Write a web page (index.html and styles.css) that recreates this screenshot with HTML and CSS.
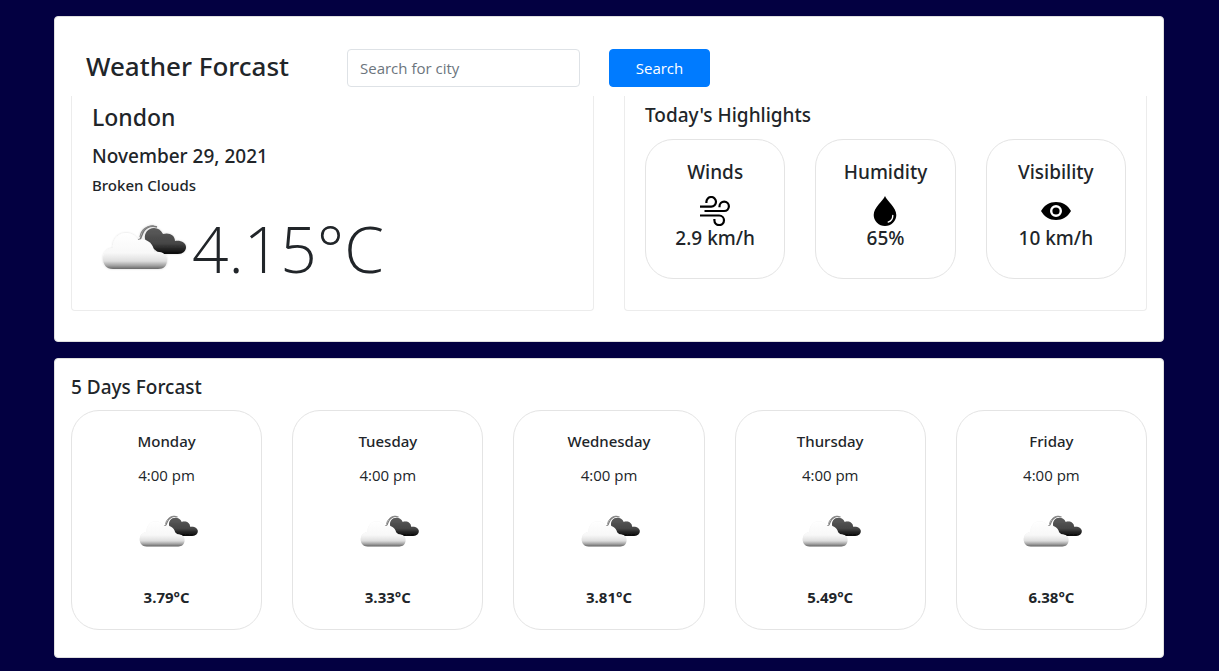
FILE: index.html
```html
<!DOCTYPE html>
<html lang="en">
<head>
<meta charset="utf-8">
<meta name="viewport" content="width=device-width, initial-scale=1">
<title>Weather Forcast</title>
<link rel="stylesheet" href="styles.css">
</head>
<body>
<svg class="sprite" aria-hidden="true">
  <defs>
    <linearGradient id="white-cloud" x1="0" y1="0" x2="0" y2="1">
      <stop offset="0" stop-color="#ffffff"/>
      <stop offset=".55" stop-color="#f8f8f8"/>
      <stop offset=".78" stop-color="#dedede"/>
      <stop offset=".9" stop-color="#a4a4a4"/>
      <stop offset="1" stop-color="#686868"/>
    </linearGradient>
    <linearGradient id="dark-cloud" x1="0" y1="0" x2="0" y2="1">
      <stop offset="0" stop-color="#5c5c5c"/>
      <stop offset=".6" stop-color="#454545"/>
      <stop offset="1" stop-color="#050505"/>
    </linearGradient>
    <filter id="soft" x="-10%" y="-10%" width="120%" height="125%">
      <feGaussianBlur stdDeviation="0.5" result="shape"/>
      <feDropShadow in="shape" dx="0" dy="0" stdDeviation="0.8" flood-color="#000" flood-opacity=".16"/>
    </filter>
    <symbol id="clouds" viewBox="0 0 100 100">
      <g filter="url(#soft)">
        <path d="M46 43c3 0 3-3 4-5 2-7 8-10 15-8" fill="none" stroke="#777" stroke-width="1.5"/>
        <path d="M48 40c1-7 7-12 14-11" fill="none" stroke="#888" stroke-width="1.2"/>
        <path d="M53 42c-1-6 3-11 9-11 4 0 7 2 9 6 6-2 12 1 12 7 6-1 11 2 11 6s-3 7-8 7H68L56 47z" fill="url(#dark-cloud)"/>
      </g>
      <path d="M21 72C14 72 11 67 11 62c0-6 4-10 10-11-1-8 5-15 13-15 5 0 9 2 12 7 8-2 16 3 16 12 8-1 13 2 13 8s-3 9-9 9z" fill="url(#white-cloud)" filter="url(#soft)"/>
    </symbol>
  </defs>
</svg>
<main class="container">
  <section class="panel panel-current">
    <form class="search-bar">
      <h1 class="title">Weather Forcast</h1>
      <input class="search-input" type="search" placeholder="Search for city" aria-label="Search for city">
      <button class="search-button" type="button">Search</button>
    </form>
    <div class="current">
      <div class="card">
        <h2 class="city">London</h2>
        <h3 class="heading date">November 29, 2021</h3>
        <p class="description">Broken Clouds</p>
        <div class="reading">
          <svg class="cloud-large" role="img" aria-label="Broken clouds"><use href="#clouds"/></svg>
          <span class="temperature">4.15°C</span>
        </div>
      </div>
      <div class="card">
        <h3 class="heading">Today's Highlights</h3>
        <div class="highlights">
          <article class="tile highlight">
            <h4 class="heading">Winds</h4>
            <svg class="icon" viewBox="0 0 30 30" fill="none" stroke="#000" stroke-width="2.2" aria-hidden="true">
              <path d="M0 10.6h11.2a4.8 4.8 0 1 0-4.8-4.8V7M4.5 15h19.7a4.7 4.7 0 1 0-4.7-4.7v1M0 19.5h19.2a4.8 4.8 0 1 1-4.8 4.8V23"/>
            </svg>
            <p class="heading">2.9 km/h</p>
          </article>
          <article class="tile highlight">
            <h4 class="heading">Humidity</h4>
            <svg class="icon" viewBox="0 0 30 30" aria-hidden="true">
              <path d="M15 0c2 5 11.300 11.500 11.300 19A11.200 10.800 0 0 1 3.700 19C3.700 11.500 13 5 15 0z"/>
              <path d="M22.800 19.500c0 3.300-1.800 5.600-4.600 6.600" fill="none" stroke="#fff" stroke-width="1.400" stroke-linecap="round"/>
            </svg>
            <p class="heading">65%</p>
          </article>
          <article class="tile highlight">
            <h4 class="heading">Visibility</h4>
            <svg class="icon" viewBox="0 0 30 30" aria-hidden="true">
              <path d="M0 15C3.500 9 8.500 6 15 6s11.500 3 15 9c-3.500 6-8.500 9-15 9S3.500 21 0 15z"/>
              <circle cx="15" cy="15" r="4.800" stroke="#fff" stroke-width="2.400"/>
            </svg>
            <p class="heading">10 km/h</p>
          </article>
        </div>
      </div>
    </div>
  </section>

  <section class="panel panel-forecast">
    <h2 class="heading">5 Days Forcast</h2>
    <div class="days">
      <article class="tile day"><h3 class="day-name">Monday</h3><p class="time">4:00 pm</p><svg class="cloud-small" aria-hidden="true"><use href="#clouds"/></svg><strong class="day-temp">3.79°C</strong></article>
      <article class="tile day"><h3 class="day-name">Tuesday</h3><p class="time">4:00 pm</p><svg class="cloud-small" aria-hidden="true"><use href="#clouds"/></svg><strong class="day-temp">3.33°C</strong></article>
      <article class="tile day"><h3 class="day-name">Wednesday</h3><p class="time">4:00 pm</p><svg class="cloud-small" aria-hidden="true"><use href="#clouds"/></svg><strong class="day-temp">3.81°C</strong></article>
      <article class="tile day"><h3 class="day-name">Thursday</h3><p class="time">4:00 pm</p><svg class="cloud-small" aria-hidden="true"><use href="#clouds"/></svg><strong class="day-temp">5.49°C</strong></article>
      <article class="tile day"><h3 class="day-name">Friday</h3><p class="time">4:00 pm</p><svg class="cloud-small" aria-hidden="true"><use href="#clouds"/></svg><strong class="day-temp">6.38°C</strong></article>
    </div>
  </section>
</main>
</body>
</html>
```
FILE: styles.css
```css
*,
*::before,
*::after {
  box-sizing: border-box;
}

body {
  margin: 0;
  background: #030041;
  color: #212529;
  font-family: "Segoe UI", "Open Sans", "Noto Sans", sans-serif;
  font-size: 15px;
  line-height: 24px;
}

h1, h2, h3, h4, p {
  margin: 0;
}

.title,
.heading,
.city,
.description,
.day-name {
  font-family: "Segoe UI", "Noto Sans", "Open Sans", sans-serif;
  font-weight: 500;
}

.sprite {
  position: absolute;
  width: 0;
  height: 0;
}

.container {
  display: flex;
  flex-direction: column;
  gap: 16px;
  max-width: 1143px;
  margin: 0 auto;
  padding: 16px 17px 14px 16px;
}

.panel {
  background: #fff;
  border: 1px solid #dfdfdf;
  border-radius: 4px;
}

.panel-current {
  padding: 32px 16px 30px;
}

.panel-forecast {
  padding: 16px 16px 27px;
}

.search-bar {
  display: flex;
  align-items: center;
  padding-left: 15px;
  margin-bottom: 9px;
}

.title {
  flex: 0 0 261px;
  padding-bottom: 4px;
  font-size: 26px;
  line-height: 32px;
}

.search-input {
  width: 233px;
  height: 38px;
  margin-right: 29px;
  padding: 6px 12px;
  border: 1px solid #dee2e6;
  border-radius: 4px;
  background: #fff;
  color: #495057;
  font: inherit;
  appearance: none;
}

.search-input::placeholder {
  color: #6c757d;
  opacity: 1;
}

.search-button {
  width: 101px;
  height: 38px;
  border: 1px solid #007bff;
  border-radius: 4px;
  background: #007bff;
  color: #fff;
  font: inherit;
  cursor: pointer;
}

.current {
  display: grid;
  grid-template-columns: 1fr 1fr;
  gap: 30px;
}

.card {
  min-height: 215px;
  padding: 7px 20px 12px;
  border: 1px solid #ececec;
  border-top: 0;
  border-radius: 0 0 4px 4px;
}

.heading {
  font-size: 19px;
  line-height: 24px;
}

.city {
  font-size: 23px;
  line-height: 29px;
}

.date {
  margin-top: 12px;
}

.description {
  margin-top: 5px;
  font-size: 15px;
  line-height: 24px;
}

.reading {
  display: flex;
  align-items: center;
}

.cloud-large {
  width: 100px;
  height: 100px;
}

.temperature {
  padding-top: 4px;
  font-size: 64px;
  font-weight: 300;
  line-height: 96px;
}

.highlights {
  display: grid;
  grid-template-columns: repeat(3, 1fr);
  gap: 30px;
  margin-top: 12px;
}

.tile {
  display: flex;
  flex-direction: column;
  align-items: center;
  border: 1px solid #e4e4e4;
  border-radius: 28px;
  text-align: center;
}

.highlight {
  padding: 20px 8px 28px;
}

.icon {
  width: 30px;
  height: 30px;
  margin-top: 12px;
}

.days {
  display: grid;
  grid-template-columns: repeat(5, 1fr);
  gap: 30px;
  margin-top: 11px;
}

.day {
  padding: 18px 16px 20px;
}

.day-name {
  font-size: 15px;
  line-height: 24px;
}

.time {
  margin-top: 10px;
}

.cloud-small {
  width: 70px;
  height: 70px;
  margin: 9px 0 19px;
}

.day-temp {
  font-size: 15px;
  font-weight: 700;
}
```
